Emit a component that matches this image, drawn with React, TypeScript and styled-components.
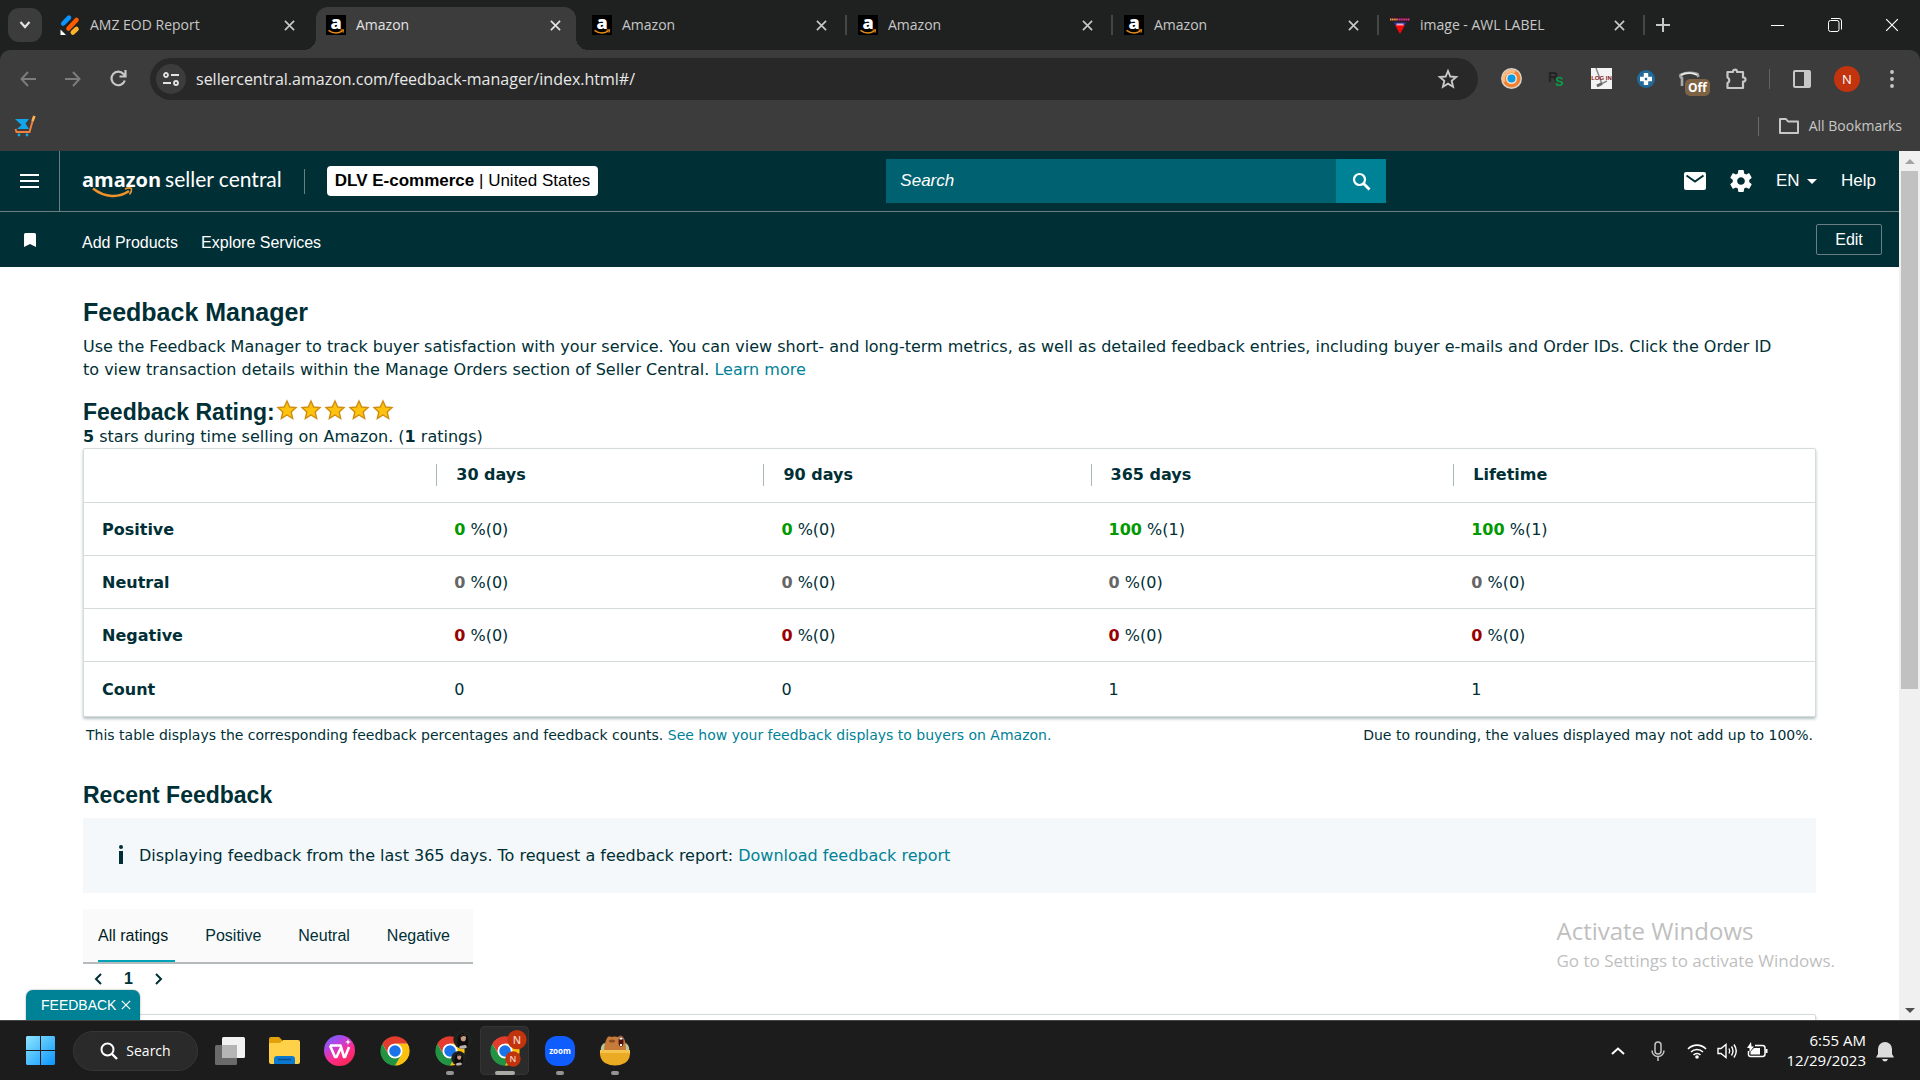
import React from 'react';
import styled, { createGlobalStyle, css } from 'styled-components';

const ui = '"Open Sans", "Noto Sans", sans-serif';
const arial = '"Liberation Sans", Arial, sans-serif';
const verdana = 'Verdana, "DejaVu Sans", sans-serif';

const Global = createGlobalStyle`
  *, *::before, *::after { box-sizing: border-box; }
  body { margin: 0; background: #fff; }
  button, input, select { font: inherit; color: inherit; margin: 0; padding: 0; border: 0; background: none; }
  svg { display: block; flex: none; overflow: visible; }
  h1, h2, p { margin: 0; }
`;

/* ---------- shell ---------- */
const Desktop = styled.div`
  display: flex;
  flex-direction: column;
  height: 100vh;
  overflow: hidden;
`;

/* ---------- browser chrome ---------- */
const TabStrip = styled.div`
  display: flex;
  align-items: stretch;
  height: 50px;
  flex: none;
  padding-left: 8px;
  background: #1f2120;
  color: #c7c7c7;
  font: 14px/20px ${ui};
`;

const TabSearch = styled.button`
  align-self: center;
  display: grid;
  place-items: center;
  width: 34px;
  height: 34px;
  margin-right: 8px;
  border-radius: 11px;
  background: #3c3c3c;
`;

const corner = css`
  content: '';
  position: absolute;
  bottom: 0;
  width: 12px;
  height: 12px;
`;

const Tab = styled.div<{ $active?: boolean; $divided?: boolean }>`
  position: relative;
  display: flex;
  align-items: center;
  gap: 10px;
  width: 260px;
  margin: 7px 6px 0 0;
  padding: 0 11px 7px 10px;
  border-radius: 12px 12px 0 0;
  ${p => p.$active && css`
    background: #3c3c3c;
    color: #e3e3e3;
    &::before { ${corner} left: -12px; background: radial-gradient(circle at 0 0, transparent 12px, #3c3c3c 12px); }
    &::after { ${corner} right: -12px; background: radial-gradient(circle at 100% 0, transparent 12px, #3c3c3c 12px); }
  `}
  ${p => p.$divided && css`
    &::after { content: ''; position: absolute; right: -5px; top: 8px; width: 2px; height: 20px; background: #454746; }
  `}
`;

const TabTitle = styled.button`
  flex: 1;
  text-align: left;
  white-space: nowrap;
`;

const IconButton = styled.button<{ $size?: number }>`
  display: grid;
  place-items: center;
  flex: none;
  width: ${p => p.$size ?? 20}px;
  height: ${p => p.$size ?? 20}px;
`;

const NewTab = styled(IconButton)`
  align-self: center;
  margin-left: 7px;
`;

const WindowButtons = styled.div`
  display: flex;
  align-items: center;
  margin-left: auto;
`;

const WindowButton = styled.button`
  display: grid;
  place-items: center;
  width: 57px;
  height: 50px;
  color: #fff;
`;

const ToolbarBack = styled.div`
  background: #1f2120;
  flex: none;
`;

const Toolbar = styled.div`
  display: flex;
  align-items: center;
  height: 57px;
  padding: 0 13px 0 12px;
  border-radius: 10px 10px 0 0;
  background: #3c3c3c;
  color: #c7c7c7;
`;

const NavButtons = styled.div`
  display: flex;
  gap: 13px;
  margin-right: 16px;
`;

const Omnibox = styled.div`
  display: flex;
  align-items: center;
  flex: 1;
  height: 42px;
  padding: 0 20px 0 6px;
  border-radius: 21px;
  background: #282828;
`;

const SiteInfo = styled.button`
  display: grid;
  place-items: center;
  width: 30px;
  height: 30px;
  margin-right: 10px;
  border-radius: 50%;
  background: #3c3c3c;
`;

const UrlInput = styled.input`
  flex: 1;
  min-width: 0;
  color: #e8e8e8;
  font: 16px/24px ${ui};
  outline: 0;
`;

const Extensions = styled.div`
  display: flex;
  align-items: center;
  gap: 15px;
  margin: 0 18px 0 18px;
`;

const Badged = styled.button`
  position: relative;
  width: 30px;
  height: 30px;
`;

const Badge = styled.span`
  position: absolute;
  left: 9px;
  top: 15px;
  padding: 0 3px;
  border-radius: 5px;
  background: #7d6243;
  color: #fff;
  font: bold 12px/17px ${ui};
`;

const VLine = styled.span<{ $color: string; $h: number }>`
  flex: none;
  width: 1px;
  height: ${p => p.$h}px;
  background: ${p => p.$color};
`;

const EndTools = styled.div`
  display: flex;
  align-items: center;
  gap: 17px;
  margin-left: 17px;
`;

const Avatar = styled.button`
  width: 26px;
  height: 26px;
  border-radius: 50%;
  background: #c1340d;
  color: #fff;
  font: 13px/26px ${ui};
`;

const Bookmarks = styled.div`
  display: flex;
  align-items: center;
  flex: none;
  height: 44px;
  padding: 0 18px 6px 14px;
  background: #3c3c3c;
  color: #c7c7c7;
  font: 14px/20px ${ui};
`;

const AllBookmarks = styled.button`
  display: flex;
  align-items: center;
  gap: 10px;
  margin-left: 20px;
`;

const Spacer = styled.span`
  flex: 1;
`;

/* ---------- seller central ---------- */
const Viewport = styled.div`
  display: flex;
  flex: 1;
  min-height: 0;
`;

const Page = styled.div`
  position: relative;
  flex: 1;
  min-width: 0;
  overflow: hidden;
  background: #fff;
  color: #002f36;
`;

const TopBar = styled.header`
  display: grid;
  grid-template-columns: 887fr 500px 490fr;
  align-items: center;
  height: 61px;
  padding-right: 23px;
  border-bottom: 1px solid #6b7f82;
  background: #002f36;
  color: #fff;
  font: 17px/24px ${arial};
`;

const Brand = styled.div`
  display: flex;
  align-items: center;
  height: 60px;
`;

const MenuButton = styled.button`
  display: grid;
  place-items: center;
  width: 60px;
  height: 60px;
  border-right: 1px solid #6b7f82;
`;

const Logo = styled.a`
  position: relative;
  display: flex;
  gap: 4px;
  align-items: baseline;
  margin: 0 22px 4px;
  color: #fff;
  text-decoration: none;
  white-space: nowrap;
  font: 21px/28px Lato, ${ui};
  & > b { font: bold 20px/28px ${ui}; }
  & > svg { position: absolute; left: 10px; top: 22px; }
`;

const Account = styled.button`
  height: 30px;
  margin-left: 22px;
  padding: 0 8px;
  border-radius: 4px;
  background: #fff;
  color: #000;
  white-space: nowrap;
`;

const SearchForm = styled.form`
  display: flex;
  height: 44px;
  background: #006170;
`;

const SearchInput = styled.input`
  flex: 1;
  padding: 0 14px;
  font-style: italic;
  outline: 0;
  &::placeholder { color: #fff; opacity: 1; }
`;

const SearchButton = styled.button`
  display: grid;
  place-items: center;
  width: 50px;
  background: #008296;
`;

const Tools = styled.nav`
  display: flex;
  align-items: center;
  justify-content: flex-end;
  gap: 24px;
  color: #fff;
  a { color: inherit; text-decoration: none; }
`;

const Language = styled.label`
  display: flex;
  align-items: center;
  gap: 6px;
  select { appearance: none; width: 25px; outline: 0; }
`;

const Favorites = styled.nav`
  display: flex;
  align-items: center;
  gap: 23px;
  height: 55px;
  padding: 0 17px 0 24px;
  background: #002f36;
  color: #fff;
  font: 16px/24px ${arial};
  a { color: inherit; text-decoration: none; padding-top: 6px; }
  a:first-of-type { margin-left: 23px; }
`;

const EditButton = styled.button`
  width: 66px;
  height: 31px;
  border: 1px solid #6b7f82;
  border-radius: 2px;
`;

const Main = styled.main`
  padding: 28px 83px 0;
  font: 16px/23px ${verdana};
  a { color: #008296; text-decoration: none; }
`;

const Title = styled.h1`
  margin-bottom: 6px;
  font: bold 25px/34px ${arial};
`;

const Intro = styled.p`
  padding-right: 40px;
`;

const Subtitle = styled.h2`
  font: bold 23px/28px ${arial};
`;

const RatingLine = styled.div`
  display: flex;
  align-items: center;
  margin-top: 17px;
`;

const RatingSummary = styled.p`
  line-height: 22px;
`;

const Stars = styled.div`
  display: flex;
  gap: 4px;
  margin-left: 2px;
  padding-bottom: 4px;
`;

const Card = styled.div`
  border: 1px solid #d5dbdb;
  border-radius: 2px;
  background: #fff;
  box-shadow: 0 2px 3px rgba(0, 47, 54, 0.3);
`;

const Table = styled.table`
  width: 100%;
  table-layout: fixed;
  border-collapse: separate;
  border-spacing: 0;
  text-align: left;
  th, td { height: 53px; padding: 0 0 0 18px; border-bottom: 1px solid #d5dbdb; }
  thead th { height: 54px; padding: 0 0 1px; }
  tbody tr:last-child > * { height: 54px; border-bottom: 0; }
`;

const ColumnName = styled.span`
  display: block;
  padding-left: 19px;
  border-left: 1px solid #aab7b8;
  line-height: 22px;
`;

const Percent = styled.b<{ $tone: string }>`
  color: ${p => p.$tone};
`;

const Notes = styled.div`
  display: flex;
  justify-content: space-between;
  padding: 8px 3px 0;
  font: 14px/20px ${verdana};
`;

const RecentTitle = styled(Subtitle)`
  margin: 36px 0 9px;
`;

const Info = styled.div`
  display: flex;
  align-items: center;
  gap: 15px;
  height: 75px;
  padding-left: 35px;
  background: #f4f8fa;
`;

const Tabs = styled.div`
  display: flex;
  width: max-content;
  gap: 30px;
  margin-top: 16px;
  padding: 0 16px 0 15px;
  border-bottom: 2px solid #b5bbbc;
  background: #fafafa;
  font: 16px/24px ${arial};
`;

const RatingTab = styled.button<{ $active?: boolean }>`
  height: 53px;
  padding: 0 7px 0 0;
  ${p => p.$active && css`
    box-shadow: inset 0 -2px #00a2b8;
    color: #001c22;
  `}
`;

const Pager = styled.div`
  display: flex;
  align-items: center;
  gap: 16px;
  height: 50px;
  padding: 5px 5px 25px;
  font: bold 16px/20px ${arial};
`;

const FeedbackTab = styled.div`
  position: absolute;
  left: 26px;
  bottom: 0;
  display: flex;
  align-items: center;
  gap: 3px;
  height: 30px;
  padding: 0 7px 0 15px;
  border-radius: 7px 7px 0 0;
  background: #008296;
  box-shadow: 0 0 2px rgba(0, 0, 0, 0.4);
  color: #fff;
  font: 14px/20px ${arial};
`;

const Watermark = styled.aside`
  position: absolute;
  right: 64px;
  bottom: 47px;
  color: #bfbfbf;
  font: 17px/24px ${ui};
  strong { display: block; font: 24px/36px ${ui}; }
`;

const Scroll = styled.div`
  display: flex;
  flex-direction: column;
  align-items: center;
  width: 21px;
  background: #f0f0f0;
`;

const ScrollThumb = styled.div`
  width: 17px;
  flex: 5;
  background: #c1c1c1;
`;

const ScrollRest = styled.div`
  flex: 3;
`;

/* ---------- taskbar ---------- */
const Taskbar = styled.footer`
  display: flex;
  align-items: center;
  flex: none;
  height: 60px;
  padding: 0 26px;
  border-top: 1px solid #454545;
  background: #1c1c1c;
  color: #fff;
  font: 14px/20px ${ui};
`;

const TaskSearch = styled.button`
  display: flex;
  align-items: center;
  justify-content: center;
  gap: 8px;
  width: 125px;
  height: 40px;
  margin: 0 1px 0 18px;
  border: 1px solid #363636;
  border-radius: 20px;
  background: #2a2a2a;
`;

const TaskApp = styled.button<{ $active?: boolean; $running?: boolean }>`
  position: relative;
  display: grid;
  place-items: center;
  width: 49px;
  height: 49px;
  margin-left: 6px;
  border-radius: 5px;
  ${p => p.$active && css`background: #2b2b2b; box-shadow: inset 0 0 0 1px #353535;`}
  ${p => (p.$running || p.$active) && css`
    &::after {
      content: '';
      position: absolute;
      bottom: 0;
      left: 50%;
      width: ${p.$active ? 20 : 8}px;
      height: 4px;
      border-radius: 2px;
      background: ${p.$active ? '#aaaaa6' : '#949494'};
      transform: translateX(-50%);
    }
  `}
`;

const Tray = styled.div`
  display: flex;
  align-items: center;
  gap: 10px;
  margin-left: auto;
`;

const TrayGroup = styled.button`
  display: flex;
  align-items: center;
  gap: 10px;
  margin-left: 4px;
`;

const Clock = styled.button`
  margin-left: 8px;
  padding-bottom: 2px;
  text-align: right;
  font-size: 15px;
`;

/* ---------- drawings ---------- */
const S = { fill: 'none', stroke: 'currentColor' } as const;

const Cross = ({ s = 12, w = 2 }: { s?: number; w?: number }) => (
  <svg width={s} height={s} viewBox="0 0 12 12" {...S} strokeWidth={w}><path d="M1 1l10 10M11 1L1 11" /></svg>
);

const AmazonIcon = () => (
  <svg width="20" height="20" viewBox="0 0 20 20">
    <rect width="20" height="20" fill="#000" />
    <text x="10" y="14" textAnchor="middle" fontFamily="Open Sans" fontWeight="800" fontSize="18" fill="#fff">a</text>
    <path d="M2.500 15.400c4.500 3.200 9.800 3.200 13.700.8" fill="none" stroke="#e38b14" strokeWidth="1.500" />
    <path d="M14.500 15.200l3-.2-.6 2.700" fill="none" stroke="#e38b14" strokeWidth="1.200" />
  </svg>
);

const ReportIcon = () => (
  <svg width="20" height="20" viewBox="0 0 20 20" strokeLinecap="round" strokeWidth="4.600">
    <path d="M3.200 8.500L9 2.600" stroke="#0a94ff" />
    <path d="M8.500 13.500L16.500 5" stroke="#ff5a00" />
    <path d="M12.800 17.500L16.500 14" stroke="#fbb32c" />
    <path d="M.5 14.500v5.500H6z" fill="#fff" stroke="none" />
  </svg>
);

const LabelIcon = () => (
  <svg width="20" height="20" viewBox="0 0 20 20">
    <path d="M0 2h20l-1 4.500H1z" fill="#3a1020" />
    <path d="M0 4.500h7" stroke="#e8b04a" strokeWidth="2.200" strokeDasharray="1.500 .6" />
    <path d="M7 4.500h13" stroke="#d8409a" strokeWidth="2.200" strokeDasharray="1.500 .6" />
    <path d="M3.500 7.500h13l-2.500 3.500H6z" fill="#2436a8" />
    <path d="M5 10h10l-5 9z" fill="#f40808" />
    <path d="M6.500 9.500h7" stroke="#f5a0c0" strokeWidth="2" />
  </svg>
);

const CartIcon = () => (
  <svg width="22" height="22" viewBox="0 0 22 22" fill="none">
    <path d="M1 4h14l-3.500 4.500L15 14H3l4.500-4z" fill="#12a5e8" />
    <path d="M20 1l-4.500 16H2.500l-1-3" stroke="#f0803c" strokeWidth="2" />
    <path d="M20.500 1l-2 5" stroke="#f7b354" strokeWidth="2.500" />
    <circle cx="5" cy="20" r="1.400" fill="#12a5e8" /><circle cx="13" cy="20" r="1.400" fill="#12a5e8" />
  </svg>
);

const Star = () => (
  <svg width="20" height="20" viewBox="0 0 20 20">
    <path d="M10 1l2.700 6 6.300.6-4.800 4.300L15.700 18.500 10 15l-5.700 3.500 1.500-6.600L1 7.600 7.300 7z" fill="#ffc20d" stroke="#cf8d12" strokeWidth="1.400" />
  </svg>
);

const arc = 'M43.050 13H24A11 11 0 0 0 14.470 29.500L4.950 13A22 22 0 0 1 43.050 13Z';
const ChromeIcon = ({ children }: { children?: React.ReactNode }) => (
  <svg width="32" height="32" viewBox="0 0 48 48">
    <circle cx="24" cy="24" r="21" fill="#fff" />
    <path d={arc} fill="#e33b2e" />
    <path d={arc} fill="#fcc10f" transform="rotate(120 24 24)" />
    <path d={arc} fill="#229342" transform="rotate(240 24 24)" />
    <circle cx="24" cy="24" r="11" fill="#fff" />
    <circle cx="24" cy="24" r="8.600" fill="#1a73e8" />
    {children}
  </svg>
);

const Portrait = ({ x, y, r }: { x: number; y: number; r: number }) => (
  <g transform={`translate(${x} ${y}) scale(${r / 14})`}>
    <circle r="14" fill="#1d2220" />
    <path d="M-5 13c0-6 3-8 6-8s5 3 5 7a14 14 0 0 1-11 1z" fill="#b9b4b2" />
    <path d="M-7 11c-3-8 0-21 7-21s10 8 8 20l-4-2-7 1z" fill="#120d0d" />
    <ellipse cx="1" cy="-3" rx="4" ry="5.500" fill="#c69a86" />
    <path d="M-3-3c0-6 7-8 8-1-2-2-5-2-8 1z" fill="#120d0d" />
  </g>
);

const tabs = [
  { title: 'AMZ EOD Report', icon: <ReportIcon /> },
  { title: 'Amazon', icon: <AmazonIcon />, active: true },
  { title: 'Amazon', icon: <AmazonIcon />, divided: true },
  { title: 'Amazon', icon: <AmazonIcon />, divided: true },
  { title: 'Amazon', icon: <AmazonIcon />, divided: true },
  { title: 'image - AWL LABEL', icon: <LabelIcon />, divided: true },
];

const Browser = () => (
  <>
    <TabStrip>
      <TabSearch aria-label="Search tabs">
        <svg width="12" height="8" viewBox="0 0 12 8" {...S} stroke="#e3e3e3" strokeWidth="2.200"><path d="M1.500 1L6 6l4.500-5" /></svg>
      </TabSearch>
      {tabs.map((t, i) => (
        <Tab key={i} $active={t.active} $divided={t.divided}>
          {t.icon}
          <TabTitle>{t.title}</TabTitle>
          <IconButton aria-label="Close tab"><Cross s={11} w={1.8} /></IconButton>
        </Tab>
      ))}
      <NewTab aria-label="New tab">
        <svg width="14" height="14" viewBox="0 0 14 14" {...S} strokeWidth="2"><path d="M7 0v14M0 7h14" /></svg>
      </NewTab>
      <WindowButtons>
        <WindowButton aria-label="Minimize"><svg width="13" height="13" viewBox="0 0 13 13" {...S}><path d="M0 6.500h13" /></svg></WindowButton>
        <WindowButton aria-label="Restore">
          <svg width="14" height="14" viewBox="0 0 14 14" {...S}><rect x=".5" y="2.500" width="10.500" height="11" rx="2" /><path d="M3 .5h8a2.500 2.500 0 0 1 2.500 2.500v8.500" /></svg>
        </WindowButton>
        <WindowButton aria-label="Close"><Cross s={14} w={1} /></WindowButton>
      </WindowButtons>
    </TabStrip>
    <ToolbarBack>
      <Toolbar>
        <NavButtons>
          <IconButton $size={32} aria-label="Back"><svg width="16" height="16" viewBox="0 0 16 16" {...S} stroke="#7c7c7c" strokeWidth="2"><path d="M8 1L1.500 8 8 15M1.500 8H16" /></svg></IconButton>
          <IconButton $size={32} aria-label="Forward"><svg width="16" height="16" viewBox="0 0 16 16" {...S} stroke="#7c7c7c" strokeWidth="2"><path d="M8 1l6.500 7L8 15M14.500 8H0" /></svg></IconButton>
          <IconButton $size={32} aria-label="Reload"><svg width="17" height="17" viewBox="0 0 17 17" {...S} strokeWidth="2.200"><path d="M14.800 10.500A6.800 6.800 0 1 1 13.500 4l2 2M15.500 0v6.500H9.500" /></svg></IconButton>
        </NavButtons>
        <Omnibox>
          <SiteInfo aria-label="Site information">
            <svg width="16" height="14" viewBox="0 0 16 14" {...S} stroke="#e3e3e3" strokeWidth="1.800"><circle cx="3" cy="3" r="2" /><path d="M8 3h8M0 11h8" /><circle cx="13" cy="11" r="2" /></svg>
          </SiteInfo>
          <UrlInput aria-label="Address" defaultValue="sellercentral.amazon.com/feedback-manager/index.html#/" />
          <IconButton aria-label="Bookmark">
            <svg width="20" height="20" viewBox="0 0 20 20" {...S} strokeWidth="1.900"><path d="M10 2l2.300 5.500 5.900.5-4.500 3.900 1.400 5.800L10 14.600l-5.100 3.100 1.400-5.800L1.800 8l5.900-.5z" /></svg>
          </IconButton>
        </Omnibox>
        <Extensions>
          <IconButton $size={30} aria-label="Lens">
            <svg width="21" height="21" viewBox="0 0 21 21"><circle cx="10.500" cy="10.500" r="10.500" fill="#d9d2c8" /><circle cx="10.500" cy="10.500" r="9" fill="#f08030" /><path d="M3 14a8 8 0 0 1 11-10" stroke="#f7bb85" strokeWidth="3" fill="none" /><circle cx="10.500" cy="10.500" r="5.500" fill="#f3e3d2" /><circle cx="10.500" cy="10.500" r="4" fill="#079ce5" /></svg>
          </IconButton>
          <IconButton $size={30} aria-label="RS">
            <svg width="16" height="16" viewBox="0 0 16 16" fontFamily="Liberation Sans" fontWeight="bold"><text x="0" y="11" fontSize="14" fill="#222">R</text><text x="7" y="15" fontSize="13" fill="#0a9a44">S</text></svg>
          </IconButton>
          <IconButton $size={30} aria-label="Log in">
            <svg width="21" height="21" viewBox="0 0 21 21"><rect width="21" height="21" fill="#f3f3f3" /><path d="M5 0l6 16M6 18l10-5" stroke="#8a8a8a" strokeWidth="1.500" /><path d="M6 18l5-2.500" stroke="#666" strokeWidth="3" /><text x="10.500" y="11.500" textAnchor="middle" fontFamily="Liberation Sans" fontWeight="bold" fontSize="6" fill="#8c1a1a">LOG IN</text></svg>
          </IconButton>
          <IconButton $size={30} aria-label="Health">
            <svg width="18" height="18" viewBox="0 0 18 18"><circle cx="9" cy="9" r="9" fill="#216a99" /><path d="M6.800 3h4.400v3.800H15v4.400h-3.800V15H6.800v-3.800H3V6.800h3.800z" fill="#fff" /><rect x="7.800" y="7.800" width="2.400" height="2.400" fill="#216a99" /></svg>
          </IconButton>
          <Badged aria-label="Shield off">
            <svg width="24" height="24" viewBox="0 0 24 24" fill="none"><path d="M6 19V11q-2-1-1.500-3 7-4 17-1l1 3" stroke="#a9a9a9" strokeWidth="2.600" /><path d="M5 8q8-4 16 0" stroke="#eee" strokeWidth="1.500" /></svg>
            <Badge>Off</Badge>
          </Badged>
          <IconButton $size={30} aria-label="Extensions">
            <svg width="22" height="22" viewBox="0 0 22 22" {...S} strokeWidth="2.200" strokeLinejoin="round"><path d="M2.500 4H8a2 2 0 0 1 4-.5V4h6v5.500h.5a2 2 0 0 1 0 4H18V20H2.500v-5a3 3 0 0 0 0-5.500z" /></svg>
          </IconButton>
        </Extensions>
        <VLine $h={20} $color="#626262" />
        <EndTools>
          <IconButton $size={30} aria-label="Side panel">
            <svg width="18" height="18" viewBox="0 0 18 18"><rect x="1" y="1" width="16" height="16" rx="1" {...S} strokeWidth="2" /><path d="M11 1h6v16h-6z" fill="currentColor" /></svg>
          </IconButton>
          <Avatar>N</Avatar>
          <IconButton $size={30} aria-label="Menu">
            <svg width="4" height="18" viewBox="0 0 4 18" fill="currentColor"><circle cx="2" cy="2" r="1.900" /><circle cx="2" cy="9" r="1.900" /><circle cx="2" cy="16" r="1.900" /></svg>
          </IconButton>
        </EndTools>
      </Toolbar>
    </ToolbarBack>
    <Bookmarks>
      <IconButton $size={22} aria-label="Store bookmark"><CartIcon /></IconButton>
      <Spacer />
      <VLine $h={19} $color="#6a6a6a" />
      <AllBookmarks>
        <svg width="20" height="16" viewBox="0 0 20 16" {...S} strokeWidth="2"><path d="M1 1h6l2 2.500h10V15H1z" strokeLinejoin="round" /></svg>
        All Bookmarks
      </AllBookmarks>
    </Bookmarks>
  </>
);

const Header = () => (
  <>
    <TopBar>
      <Brand>
        <MenuButton aria-label="Menu">
          <svg width="19" height="15" viewBox="0 0 19 15" fill="#fff"><path d="M0 0h19v2H0zM0 6h19v2H0zM0 12h19v2H0z" /></svg>
        </MenuButton>
        <Logo href="#home">
          <b>amazon</b>seller central
          <svg width="42" height="12" viewBox="0 0 42 12" fill="none" stroke="#f0932b"><path d="M1 1.500c12 9.500 26 9.500 36 2.500" strokeWidth="2.400" /><path d="M33 2q4-2 6.500-.5.500 3-2 6" strokeWidth="1.600" /></svg>
        </Logo>
        <VLine $h={25} $color="#6b7f82" />
        <Account><b>DLV E-commerce</b> | United States</Account>
      </Brand>
      <SearchForm onSubmit={e => e.preventDefault()}>
        <SearchInput aria-label="Search" placeholder="Search" />
        <SearchButton aria-label="Submit search">
          <svg width="19" height="19" viewBox="0 0 19 19" {...S} strokeWidth="2.200"><circle cx="7.500" cy="7.500" r="5.500" /><path d="M11.500 11.500l6 6" strokeWidth="2.800" /></svg>
        </SearchButton>
      </SearchForm>
      <Tools>
        <IconButton $size={22} aria-label="Messages">
          <svg width="22" height="18" viewBox="0 0 22 18"><rect width="22" height="18" rx="2" fill="#fff" /><path d="M2.500 3.500L11 9.500l8.500-6" fill="none" stroke="#002f36" strokeWidth="2" /></svg>
        </IconButton>
        <IconButton $size={22} aria-label="Settings">
          <svg width="22" height="22" viewBox="2 2 20 20" fill="#fff"><path d="M19.430 12.980c.04-.32.07-.64.07-.98s-.03-.66-.07-.98l2.110-1.650c.19-.15.24-.42.12-.64l-2-3.460c-.12-.22-.39-.3-.61-.22l-2.490 1c-.52-.4-1.080-.73-1.690-.98l-.38-2.650A.488.488 0 0 0 14 2h-4c-.25 0-.46.18-.49.42l-.38 2.650c-.61.25-1.170.59-1.690.98l-2.490-1c-.23-.09-.49 0-.61.22l-2 3.460c-.13.22-.07.49.12.64l2.110 1.650c-.04.32-.07.65-.07.98s.03.66.07.98l-2.110 1.650c-.19.15-.24.42-.12.64l2 3.460c.12.22.39.3.61.22l2.490-1c.52.4 1.080.73 1.690.98l.38 2.650c.03.24.24.42.49.42h4c.25 0 .46-.18.49-.42l.38-2.650c.61-.25 1.170-.59 1.690-.98l2.490 1c.23.09.49 0 .61-.22l2-3.460c.12-.22.07-.49-.12-.64l-2.110-1.650zM12 15.500c-1.930 0-3.500-1.570-3.500-3.500s1.570-3.500 3.500-3.500 3.500 1.570 3.500 3.500-1.570 3.500-3.500 3.500z" /></svg>
        </IconButton>
        <Language>
          <select aria-label="Language" defaultValue="EN"><option>EN</option></select>
          <svg width="10" height="5" viewBox="0 0 10 5" fill="#fff"><path d="M0 0h10L5 5z" /></svg>
        </Language>
        <a href="#help">Help</a>
      </Tools>
    </TopBar>
    <Favorites>
      <svg width="12" height="14" viewBox="0 0 12 14" fill="#fff"><path d="M1.500 0h9A1.500 1.500 0 0 1 12 1.500V14l-6-3-6 3V1.500A1.500 1.500 0 0 1 1.500 0z" /></svg>
      <a href="#add">Add Products</a>
      <a href="#explore">Explore Services</a>
      <Spacer />
      <EditButton>Edit</EditButton>
    </Favorites>
  </>
);

const rows = [
  { name: 'Positive', tone: '#009900', cells: [['0', 0], ['0', 0], ['100', 1], ['100', 1]] },
  { name: 'Neutral', tone: '#666666', cells: [['0', 0], ['0', 0], ['0', 0], ['0', 0]] },
  { name: 'Negative', tone: '#990000', cells: [['0', 0], ['0', 0], ['0', 0], ['0', 0]] },
];

const Col = styled.col<{ $w: string }>`
  width: ${p => p.$w};
`;

const Manager = () => (
  <Main>
    <Title>Feedback Manager</Title>
    <Intro>
      Use the Feedback Manager to track buyer satisfaction with your service. You can view short- and long-term metrics, as well as
      detailed feedback entries, including buyer e-mails and Order IDs. Click the Order ID to view transaction details within the
      Manage Orders section of Seller Central. <a href="#learn">Learn more</a>
    </Intro>
    <RatingLine>
      <Subtitle>Feedback Rating:</Subtitle>
      <Stars role="img" aria-label="5 stars">{[1, 2, 3, 4, 5].map(n => <Star key={n} />)}</Stars>
    </RatingLine>
    <RatingSummary><b>5</b> stars during time selling on Amazon. (<b>1</b> ratings)</RatingSummary>
    <Card>
      <Table>
        <colgroup>
          <Col $w="20.35%" /><Col $w="18.9%" /><Col $w="18.9%" /><Col $w="20.95%" /><col />
        </colgroup>
        <thead>
          <tr>
            <th aria-label="Rating" />
            {['30 days', '90 days', '365 days', 'Lifetime'].map(h => <th key={h} scope="col"><ColumnName>{h}</ColumnName></th>)}
          </tr>
        </thead>
        <tbody>
          {rows.map(r => (
            <tr key={r.name}>
              <th scope="row">{r.name}</th>
              {r.cells.map(([pct, n], i) => <td key={i}><Percent $tone={r.tone}>{pct}</Percent> %({n})</td>)}
            </tr>
          ))}
          <tr><th scope="row">Count</th><td>0</td><td>0</td><td>1</td><td>1</td></tr>
        </tbody>
      </Table>
    </Card>
    <Notes>
      <span>This table displays the corresponding feedback percentages and feedback counts. <a href="#see">See how your feedback displays to buyers on Amazon.</a></span>
      <span>Due to rounding, the values displayed may not add up to 100%.</span>
    </Notes>
    <RecentTitle>Recent Feedback</RecentTitle>
    <Info>
      <svg width="6" height="22" viewBox="0 0 6 22" fill="#002f36"><circle cx="3" cy="2" r="2" /><path d="M1 6h4v13H1z" /></svg>
      <span>Displaying feedback from the last 365 days. To request a feedback report: <a href="#download">Download feedback report</a></span>
    </Info>
    <Tabs>
      <RatingTab $active>All ratings</RatingTab>
      <RatingTab>Positive</RatingTab>
      <RatingTab>Neutral</RatingTab>
      <RatingTab>Negative</RatingTab>
    </Tabs>
    <Pager>
      <IconButton aria-label="Previous"><svg width="8" height="12" viewBox="0 0 8 12" {...S} strokeWidth="2"><path d="M7 1L2 6l5 5" /></svg></IconButton>
      <span>1</span>
      <IconButton aria-label="Next"><svg width="8" height="12" viewBox="0 0 8 12" {...S} strokeWidth="2"><path d="M1 1l5 5-5 5" /></svg></IconButton>
    </Pager>
    <Card><Pager /></Card>
  </Main>
);

const WindowsBar = () => (
  <Taskbar>
    <IconButton $size={29} aria-label="Start">
      <svg width="29" height="29" viewBox="0 0 29 29">
        <defs><linearGradient id="win" x1="0" y1="0" x2="1" y2="1"><stop offset="0" stopColor="#8fe6ff" /><stop offset="1" stopColor="#0a95ff" /></linearGradient></defs>
        <path d="M1 0h13v14H0V1zM15 0h13l1 1v13H15zM0 15h14v14H1l-1-1zM15 15h14v13l-1 1H15z" fill="url(#win)" />
      </svg>
    </IconButton>
    <TaskSearch>
      <svg width="18" height="18" viewBox="0 0 18 18" {...S} strokeWidth="2"><circle cx="7.500" cy="7.500" r="6" /><path d="M12 12l5 5" strokeWidth="2.400" /></svg>
      Search
    </TaskSearch>
    <TaskApp aria-label="Task view">
      <svg width="30" height="28" viewBox="0 0 30 28"><rect x="7" width="23" height="21" rx="1.500" fill="#f2f2f2" /><rect y="8" width="22" height="20" rx="1.500" fill="#6a6a6a" /><path d="M7 8h15v13H7z" fill="#b5b5b5" /></svg>
    </TaskApp>
    <TaskApp aria-label="File Explorer">
      <svg width="31" height="27" viewBox="0 0 31 27"><path d="M0 2a2 2 0 0 1 2-2h8l3 3v6H0z" fill="#e2a009" /><path d="M0 6h11l3-3h15a2 2 0 0 1 2 2v20a2 2 0 0 1-2 2H2a2 2 0 0 1-2-2z" fill="#ffd149" /><path d="M5 27v-5a3 3 0 0 1 3-3h15a3 3 0 0 1 3 3v5z" fill="#0b79d0" /><path d="M9 22.500h13" stroke="#074e8c" strokeWidth="1.500" /></svg>
    </TaskApp>
    <TaskApp aria-label="WPS">
      <svg width="31" height="31" viewBox="0 0 31 31">
        <defs><linearGradient id="wps" x1="0" y1="0" x2=".6" y2="1"><stop offset="0" stopColor="#5a6bff" /><stop offset=".35" stopColor="#b146e8" /><stop offset=".7" stopColor="#ff2c8c" /><stop offset="1" stopColor="#f8285a" /></linearGradient></defs>
        <circle cx="15.500" cy="15.500" r="15.500" fill="url(#wps)" />
        <path d="M6 10.500l5 11.500h1.500l4.500-9.500M6 10.500h10.500l3.500 11.500h1l4-10" fill="none" stroke="#fff" strokeWidth="2.600" strokeLinejoin="round" />
        <path d="M24 4l.8 2.200L27 7l-2.200.8L24 10l-.8-2.200L21 7l2.200-.8z" fill="#fff" />
      </svg>
    </TaskApp>
    <TaskApp aria-label="Chrome"><ChromeIcon /></TaskApp>
    <TaskApp aria-label="Chrome profile" $running><ChromeIcon><Portrait x={43} y={7} r={14} /><Portrait x={37} y={35} r={11} /></ChromeIcon></TaskApp>
    <TaskApp aria-label="Chrome profile N" $active>
      <ChromeIcon>
        <g fill="#c1340d"><circle cx="42" cy="7" r="14.500" /><circle cx="36" cy="36" r="11.500" /></g>
        <g fill="#f4cdbf" fontFamily="Open Sans" fontWeight="600" textAnchor="middle"><text x="42" y="13" fontSize="16">N</text><text x="36" y="41" fontSize="13">N</text></g>
      </ChromeIcon>
    </TaskApp>
    <TaskApp aria-label="Zoom" $running>
      <svg width="30" height="30" viewBox="0 0 30 30"><rect width="30" height="30" rx="12" fill="#0f5cff" /><text x="15" y="18" textAnchor="middle" fontFamily="Open Sans" fontWeight="bold" fontSize="8" fill="#fff">zoom</text></svg>
    </TaskApp>
    <TaskApp aria-label="Honeygain" $running>
      <svg width="30" height="31" viewBox="0 0 30 31">
        <path d="M1 16a5 6 0 0 1 5-8l3 8zM29 16a5 6 0 0 0-5-8l-3 8z" fill="#b9c79a" />
        <path d="M4 17c0-6 1-10 3-14q2-3 4-1 4-1 7 0 3-3 5 0 3 3 3 15z" fill="#c67b3b" />
        <ellipse cx="12" cy="6" rx="3" ry="1.500" fill="#8a4c1e" /><ellipse cx="21" cy="6.500" rx="2.500" ry="5" fill="#4a1010" /><path d="M19.500 2.500h3v2h-3zM20 9h2v2h-2z" fill="#fff" />
        <path d="M0 15h30q1 9-5 13-10 5-20 0-6-4-5-13z" fill="#eaaa24" /><path d="M0 15h30v3H0z" fill="#f6c44c" />
      </svg>
    </TaskApp>
    <Tray>
      <IconButton $size={30} aria-label="Hidden icons"><svg width="14" height="8" viewBox="0 0 14 8" {...S} strokeWidth="2"><path d="M1 7l6-5.500L13 7" /></svg></IconButton>
      <IconButton $size={30} aria-label="Microphone"><svg width="14" height="20" viewBox="0 0 14 20" {...S} stroke="#c4c4c4" strokeWidth="1.500"><rect x="4" y="1" width="6" height="12" rx="3" /><path d="M1 9.500a6 6 0 0 0 12 0M7 16v4" /></svg></IconButton>
      <TrayGroup aria-label="Network, sound and battery">
        <svg width="20" height="16" viewBox="0 0 20 16" {...S} strokeWidth="1.600"><path d="M1 6a12.500 12.500 0 0 1 18 0M4 9a8.500 8.500 0 0 1 12 0M6.500 12a5 5 0 0 1 7 0" /><circle cx="10" cy="14" r="1.800" fill="currentColor" stroke="none" /></svg>
        <svg width="20" height="18" viewBox="0 0 20 18" {...S} strokeWidth="1.400"><path d="M1 6.500h3L9 2.500v13l-5-4H1zM12 6.500q1.500 2.500 0 5M14.500 4.500q3 4.500 0 9M17 2.500q4.500 6.500 0 13" /></svg>
        <svg width="21" height="17" viewBox="0 0 21 17"><path d="M8 3.500h7.500a2.500 2.500 0 0 1 2.500 2.500v6a2.500 2.500 0 0 1-2.500 2.500h-12A2 2 0 0 1 1.500 12V9" {...S} strokeWidth="1.500" /><path d="M18.500 7h2v4h-2zM7 6h6v6.500H3.500V9.500zM4 0L0 6h2.500v4L7 4.500H4.500z" fill="#fff" /></svg>
      </TrayGroup>
      <Clock>6:55 AM<br />12/29/2023</Clock>
      <IconButton $size={18} aria-label="Notifications"><svg width="18" height="20" viewBox="0 0 18 20" fill="#dcdcdc"><path d="M9 0a7 7 0 0 1 7 7v5l2 3.500H0L2 12V7a7 7 0 0 1 7-7zM6 17h6q-1 2.500-3 2.500T6 17z" /></svg></IconButton>
    </Tray>
  </Taskbar>
);

export default function App() {
  return (
    <Desktop>
      <Global />
      <Browser />
      <Viewport>
        <Page>
          <Header />
          <Manager />
          <FeedbackTab>
            <button>FEEDBACK</button>
            <IconButton $size={14} aria-label="Dismiss feedback"><Cross s={10} w={1.5} /></IconButton>
          </FeedbackTab>
          <Watermark><strong>Activate Windows</strong>Go to Settings to activate Windows.</Watermark>
        </Page>
        <Scroll>
          <IconButton aria-label="Scroll up"><svg width="10" height="5" viewBox="0 0 10 5" fill="#a3a3a3"><path d="M0 5h10L5 0z" /></svg></IconButton>
          <ScrollThumb />
          <ScrollRest />
          <IconButton aria-label="Scroll down"><svg width="10" height="5" viewBox="0 0 10 5" fill="#505050"><path d="M0 0h10L5 5z" /></svg></IconButton>
        </Scroll>
      </Viewport>
      <WindowsBar />
    </Desktop>
  );
}
